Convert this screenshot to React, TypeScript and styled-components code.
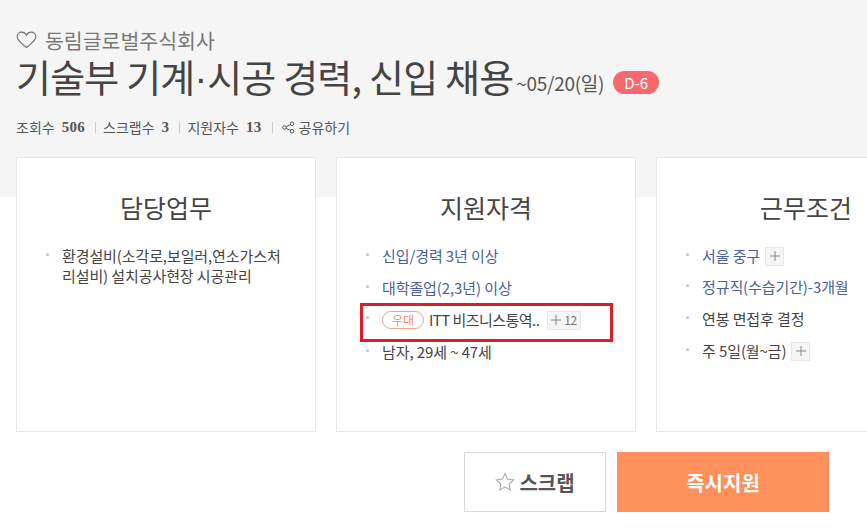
import React from "react";
import styled, { createGlobalStyle } from "styled-components";

const Global = createGlobalStyle`
  html, body { margin: 0; padding: 0; background: #fff; }
  body { width: 867px; height: 529px; overflow: hidden; font-family: "Noto Sans CJK KR", "Noto Sans", sans-serif; color: #444; }
`;
const Page = styled.div`width: 867px; height: 529px; overflow: hidden;`;
const Hero = styled.header`
  background: #f5f5f5; height: 197px; box-sizing: border-box; padding: 27px 16px 0;
`;
const Company = styled.div`
  display: flex; align-items: center; gap: 8px; height: 26px;
  font-size: 20.5px; line-height: 26px; color: #777; letter-spacing: 0;
`;
const TitleRow = styled.div`display: flex; align-items: center; height: 46px; margin-top: 1px;`;
const Title = styled.h1`
  margin: 0; font-weight: 400; font-size: 38px; line-height: 46px; color: #444; letter-spacing: -0.8px; white-space: nowrap;
`;
const TitleDot = styled.span`font-family: "Liberation Sans", sans-serif; letter-spacing: 0;`;
const Deadline = styled.span`
  font-size: 19px; color: #555; margin-left: 3px; margin-top: 10px; letter-spacing: -0.3px; white-space: nowrap;
`;
const DBadge = styled.span`
  margin-left: 9px; margin-top: 11px; width: 46px; height: 23px; border-radius: 12px; background: #f9686f; color: #fff;
  font-size: 15px; line-height: 23px; text-align: center;
`;
const Stats = styled.div`
  display: flex; align-items: center; margin-top: 17px; height: 20px; font-size: 14px; color: #555;
`;
const StatNum = styled.b`
  font-family: "Liberation Serif", serif; font-weight: 700; font-size: 15px; margin-left: 7px; color: #555; letter-spacing: 0.3px;
`;
const Sep = styled.i`display: inline-block; width: 1px; height: 11px; background: #ccc; margin: 0 7px 0 10px;`;
const Share = styled.span`display: inline-flex; align-items: center; gap: 4px; margin-left: 2px;`;
const Cards = styled.section`
  display: flex; gap: 20px; margin: -40px 0 0 16px; width: 1000px;
`;
const Card = styled.article`
  width: 300px; height: 275px; box-sizing: border-box; background: #fff; border: 1px solid #e6e6e6; padding: 31px 28px 0;
`;
const CardTitle = styled.h2`
  margin: 0 0 21px; font-size: 25px; line-height: 36px; font-weight: 400; color: #444; text-align: center;
`;
const List = styled.ul<{ $top?: number }>`
  margin: ${p => p.$top ?? 0}px 0 0; padding: 0; list-style: none;
`;
const Item = styled.li<{ $link?: boolean; $gap?: number }>`
  position: relative; padding-left: 45px; margin-left: -28px; margin-bottom: ${p => p.$gap ?? 11}px;
  font-size: 15px; line-height: 20px; min-height: 20px; letter-spacing: -0.1px; width: 226px;
  color: ${p => (p.$link ? "#4a5f9c" : "#444")};
  &::before {
    content: ""; position: absolute; left: 29px; top: 7px; width: 3px; height: 3px; border-radius: 50%; background: #c4c4c4;
  }
`;
const Inline = styled.span`display: inline-flex; align-items: center; white-space: nowrap;`;
const Condensed = styled.span`letter-spacing: -0.55px;`;
const Pref = styled.span`
  display: inline-block; box-sizing: border-box; width: 42px; height: 18px; border: 1px solid #eea583; border-radius: 9px;
  color: #ee8f63; font-size: 12px; line-height: 15px; text-align: center; margin-right: 5px;
`;
const More = styled.span<{ $gap?: number }>`
  display: inline-flex; align-items: center; justify-content: center; gap: 3px; box-sizing: border-box; height: 19px; min-width: 19px; padding: 0 3px;
  background: #f5f5f5; border: 1px solid #e6e6e6; color: #777; font-size: 12px; margin-left: ${p => p.$gap ?? 5}px; letter-spacing: -0.5px;
`;
const Highlight = styled.span`
  position: absolute; left: 23px; top: -6px; width: 253px; height: 39px; box-sizing: border-box; border: 3px solid #d8202b; pointer-events: none;
`;
const Actions = styled.div`display: flex; gap: 11px; margin: 20px 0 0 464px;`;
const ScrapButton = styled.button`
  display: flex; align-items: center; justify-content: center; gap: 4px; width: 142px; height: 60px; box-sizing: border-box;
  background: #fff; border: 1px solid #d8d8d8; color: #555; font: 700 20px "Noto Sans CJK KR", sans-serif; padding: 0;
`;
const ApplyButton = styled.button`
  width: 212px; height: 60px; background: #ff8f5b; border: 0; color: #fff; font: 700 20px "Noto Sans CJK KR", sans-serif; padding: 0;
`;

const Plus = () => (
  <svg width="10" height="10" viewBox="0 0 10 10" fill="none" stroke="#888" strokeWidth="1"><path d="M5 0v10M0 5h10" /></svg>
);

export default function App() {
  return (
    <Page>
      <Global />
      <Hero>
        <Company>
          <svg width="21" height="18" viewBox="0 0 21 18" fill="none" stroke="#777" strokeWidth="1.2">
            <path d="M10.5 16.500C7 13.500 1.200 10 1.200 5.600 1.200 3 3.200 1.200 5.600 1.200c2 0 3.800 1 4.900 3 1.100-2 2.900-3 4.900-3 2.400 0 4.400 1.800 4.400 4.400 0 4.400-5.800 7.900-9.300 10.900z" />
          </svg>
          동림글로벌주식회사
        </Company>
        <TitleRow>
          <Title>기술부 기계<TitleDot>·</TitleDot>시공 경력, 신입 채용</Title>
          <Deadline>~05/20(일)</Deadline>
          <DBadge>D-6</DBadge>
        </TitleRow>
        <Stats>
          조회수<StatNum>506</StatNum><Sep />
          스크랩수<StatNum>3</StatNum><Sep />
          지원자수<StatNum>13</StatNum><Sep />
          <Share>
            <svg width="13" height="13" viewBox="0 0 13 13" fill="none" stroke="#555" strokeWidth="1">
              <circle cx="2.500" cy="6.500" r="1.800" /><circle cx="10" cy="2.800" r="1.800" /><circle cx="10" cy="10.200" r="1.800" />
              <path d="M4.200 5.700l4.200-2.100M4.200 7.300l4.200 2.100" />
            </svg>
            공유하기
          </Share>
        </Stats>
      </Hero>
      <Cards>
        <Card>
          <CardTitle>담당업무</CardTitle>
          <List>
            <Item>환경설비(소각로,보일러,연소가스처리설비) 설치공사현장 시공관리</Item>
          </List>
        </Card>
        <Card>
          <CardTitle>지원자격</CardTitle>
          <List>
            <Item $link $gap={12}>신입/경력 3년 이상</Item>
            <Item $link $gap={11}>대학졸업(2,3년) 이상</Item>
            <Item $gap={12}>
              <Inline><Pref>우대</Pref><Condensed>ITT 비즈니스통역..</Condensed><More $gap={8}><Plus />12</More></Inline>
              <Highlight />
            </Item>
            <Item>남자, 29세 ~ 47세</Item>
          </List>
        </Card>
        <Card>
          <CardTitle>근무조건</CardTitle>
          <List $top={1}>
            <Item $link $gap={11}><Inline>서울 중구<More><Plus /></More></Inline></Item>
            <Item $link $gap={12}>정규직(수습기간)-3개월</Item>
            <Item $gap={12}>연봉 면접후 결정</Item>
            <Item><Inline>주 5일(월~금)<More><Plus /></More></Inline></Item>
          </List>
        </Card>
      </Cards>
      <Actions>
        <ScrapButton>
          <svg width="20" height="20" viewBox="0 0 20 20" fill="none" stroke="#aaa" strokeWidth="1.1">
            <path d="M10 1.500l2.600 5.600 6 .8-4.400 4.100 1.100 6L10 15.100 4.700 18l1.100-6L1.400 7.900l6-.8z" />
          </svg>
          스크랩
        </ScrapButton>
        <ApplyButton>즉시지원</ApplyButton>
      </Actions>
    </Page>
  );
}
